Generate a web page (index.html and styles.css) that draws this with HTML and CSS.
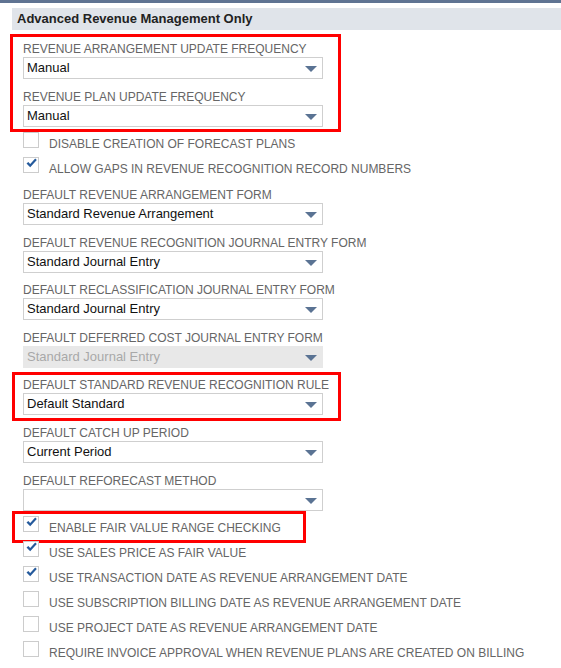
FILE: index.html
```html
<!DOCTYPE html>
<html lang="en">
<head>
  <meta charset="UTF-8" />
  <title>Accounting Preferences</title>
  <link rel="stylesheet" href="styles.css">
</head>
<body>
  <div class="topbar"></div>
  <div class="section-head">Advanced Revenue Management Only</div>

  <main class="prefs">
    <div class="group mark mark-a">
      <div class="field">
        <div class="field-label">Revenue Arrangement Update Frequency</div>
        <div class="select"><span>Manual</span><i class="arrow"></i></div>
      </div>
      <div class="field">
        <div class="field-label">Revenue Plan Update Frequency</div>
        <div class="select"><span>Manual</span><i class="arrow"></i></div>
      </div>
    </div>

    <div class="checks checks-top">
      <label class="check"><span class="box"></span>Disable Creation of Forecast Plans</label>
      <label class="check"><span class="box on"></span>Allow Gaps in Revenue Recognition Record Numbers</label>
    </div>

    <div class="group group-main">
      <div class="field">
        <div class="field-label">Default Revenue Arrangement Form</div>
        <div class="select"><span>Standard Revenue Arrangement</span><i class="arrow"></i></div>
      </div>
      <div class="field">
        <div class="field-label">Default Revenue Recognition Journal Entry Form</div>
        <div class="select"><span>Standard Journal Entry</span><i class="arrow"></i></div>
      </div>
      <div class="field">
        <div class="field-label">Default Reclassification Journal Entry Form</div>
        <div class="select"><span>Standard Journal Entry</span><i class="arrow"></i></div>
      </div>
      <div class="field">
        <div class="field-label">Default Deferred Cost Journal Entry Form</div>
        <div class="select disabled"><span>Standard Journal Entry</span><i class="arrow"></i></div>
      </div>
      <div class="field mark mark-b">
        <div class="field-label">Default Standard Revenue Recognition Rule</div>
        <div class="select"><span>Default Standard</span><i class="arrow"></i></div>
      </div>
      <div class="field">
        <div class="field-label">Default Catch Up Period</div>
        <div class="select"><span>Current Period</span><i class="arrow"></i></div>
      </div>
      <div class="field">
        <div class="field-label">Default Reforecast Method</div>
        <div class="select"><span></span><i class="arrow"></i></div>
      </div>
    </div>

    <div class="checks checks-bottom">
      <label class="check mark mark-c"><span class="box on"></span>Enable Fair Value Range Checking</label>
      <label class="check"><span class="box on"></span>Use Sales Price as Fair Value</label>
      <label class="check"><span class="box on"></span>Use Transaction Date as Revenue Arrangement Date</label>
      <label class="check"><span class="box"></span>Use Subscription Billing Date as Revenue Arrangement Date</label>
      <label class="check"><span class="box"></span>Use Project Date as Revenue Arrangement Date</label>
      <label class="check"><span class="box"></span>Require Invoice Approval When Revenue Plans Are Created on Billing</label>
    </div>
  </main>
</body>
</html>
```

FILE: styles.css
```css
body {
  margin: 0;
  font-family: "Liberation Sans", Arial, sans-serif;
  background: #fff;
  color: #000;
}
.topbar {
  height: 3px;
  background: #5f7392;
}
.section-head {
  margin: 5px 0 0 12px;
  height: 22px;
  line-height: 22px;
  padding-left: 5px;
  background: #e0e4ea;
  font-size: 13px;
  font-weight: bold;
  color: #222;
}
.prefs {
  padding: 12px 0 0 23px;
}
.group {
  display: flex;
  flex-direction: column;
  gap: 11px;
  width: 300px;
}
.group-main {
  gap: 10.6px;
  margin-top: 5.7px;
}
.field-label {
  height: 15px;
  line-height: 15px;
  font-size: 12px;
  color: #666;
  text-transform: uppercase;
  white-space: nowrap;
}
.select {
  position: relative;
  box-sizing: border-box;
  height: 22px;
  border: 1px solid #cfcfcf;
  padding-left: 3px;
  line-height: 20px;
  font-size: 13px;
  color: #111;
}
.select.disabled {
  background: #e8e8e8;
  border-color: #e8e8e8;
  color: #a8a8a8;
}
.arrow {
  position: absolute;
  right: 5px;
  top: 8px;
  width: 0;
  height: 0;
  border-left: 6px solid transparent;
  border-right: 6px solid transparent;
  border-top: 6px solid #5a7393;
}
.checks {
  display: flex;
  flex-direction: column;
}
.checks-top {
  margin-top: 5.3px;
}
.checks-bottom {
  margin-top: 5.7px;
}
.check {
  display: flex;
  align-items: baseline;
  gap: 10px;
  height: 25px;
  line-height: 25px;
  font-size: 12px;
  color: #666;
  text-transform: uppercase;
  white-space: nowrap;
}
.box {
  position: relative;
  display: inline-block;
  box-sizing: border-box;
  width: 16px;
  height: 16px;
  border: 1px solid #cccccc;
  background: #fff;
}
.box.on::after {
  content: "";
  position: absolute;
  left: 2px;
  top: 0;
  width: 11px;
  height: 10px;
  background: url("data:image/svg+xml,%3Csvg xmlns='http://www.w3.org/2000/svg' viewBox='0 0 11 10'%3E%3Cpath d='M0.5 5.6 L2.3 3.9 L4.2 5.9 L9.2 0.4 L10.8 1.9 L4.2 9.3 Z' fill='%23255a9c'/%3E%3C/svg%3E") no-repeat;
}

/* red annotation frames */
.mark {
  position: relative;
}
.mark::before {
  content: "";
  position: absolute;
  border: 3px solid #f00;
  pointer-events: none;
}
.mark-a::before {
  top: -8px;
  bottom: -5px;
  left: -13px;
  right: -18px;
}
.mark-b::before {
  top: -6px;
  bottom: -6px;
  left: -11px;
  right: -18px;
}
.mark-c::before {
  top: -5px;
  bottom: -2px;
  left: -11px;
  width: 288px;
}
```
